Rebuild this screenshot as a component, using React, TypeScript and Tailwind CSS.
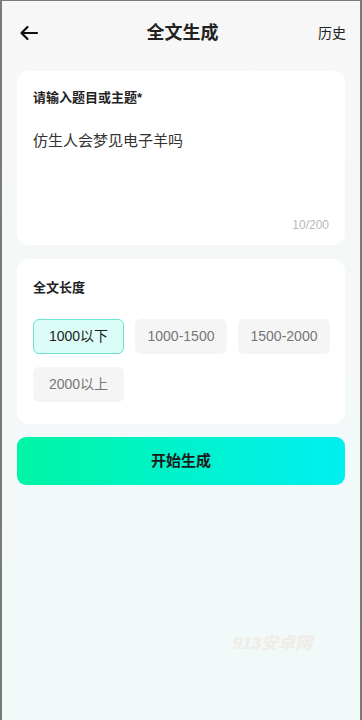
import { useState } from 'react';

const lengths = ['1000以下', '1000-1500', '1500-2000', '2000以上'];

const App = () => {
  const [picked, setPicked] = useState(0);
  const topic = '仿生人会梦见电子羊吗';

  return (
    <div
      className="w-[362px] h-[720px] overflow-hidden flex flex-col border-l-2 border-r-2 border-t border-[#7a7a7a] bg-gradient-to-b from-[#f7f7f7] via-[#f4f8f8] to-[#f1f9f9] text-[#222]"
      style={{ fontFamily: '"Liberation Sans", "Noto Sans CJK SC", sans-serif' }}
    >
      <header className="h-[62px] shrink-0 grid grid-cols-[1fr_auto_1fr] items-center pl-[17px] pr-[14px] pt-[1px]">
        <svg width="20" height="16" viewBox="0 0 20 16" fill="none" stroke="#111" strokeWidth="2.2" strokeLinecap="round" strokeLinejoin="round">
          <path d="M18 8H2.5M8.5 2L2.5 8l6 6" />
        </svg>
        <h1 className="text-[18px] font-bold leading-none">全文生成</h1>
        <button className="justify-self-end text-[14px] leading-none text-[#222]">历史</button>
      </header>

      <section className="mx-[15px] mt-[8px] h-[174px] bg-white rounded-[12px] px-[16px] pt-[20px] pb-[14px] flex flex-col">
        <div className="text-[13px] font-bold leading-none">请输入题目或主题*</div>
        <div className="mt-[29px] text-[15px] leading-none text-[#333]">{topic}</div>
        <div className="mt-auto self-end text-[12px] leading-none text-[#b8b8b8]">
          {topic.length}/200
        </div>
      </section>

      <section className="mx-[15px] mt-[14px] h-[165px] bg-white rounded-[12px] px-[16px] pt-[22px]">
        <div className="text-[13px] font-bold leading-none">全文长度</div>
        <div className="mt-[25px] grid grid-cols-[91px_92px_92px] gap-x-[11px] gap-y-[13px]">
          {lengths.map((l, i) => (
            <button
              key={l}
              onClick={() => setPicked(i)}
              className={
                i === picked
                  ? 'h-[35px] rounded-[6px] border border-[#6fe3d2] bg-[#dcfcf8] text-[14px] text-[#1d1d1d]'
                  : 'h-[35px] rounded-[6px] bg-[#f5f5f5] text-[14px] text-[#777]'
              }
            >
              {l}
            </button>
          ))}
        </div>
      </section>

      <button className="mx-[15px] mt-[13px] h-[48px] rounded-[9px] bg-gradient-to-r from-[#00f5a3] to-[#00eff0] text-[15px] font-bold text-[#1a1a1a]">
        开始生成
      </button>

      <div className="flex-1 flex justify-end pr-[48px] pt-[150px]">
        <span className="text-[17px] italic font-bold text-[#efebe5] leading-none">913安卓网</span>
      </div>
    </div>
  );
};

export default App;
